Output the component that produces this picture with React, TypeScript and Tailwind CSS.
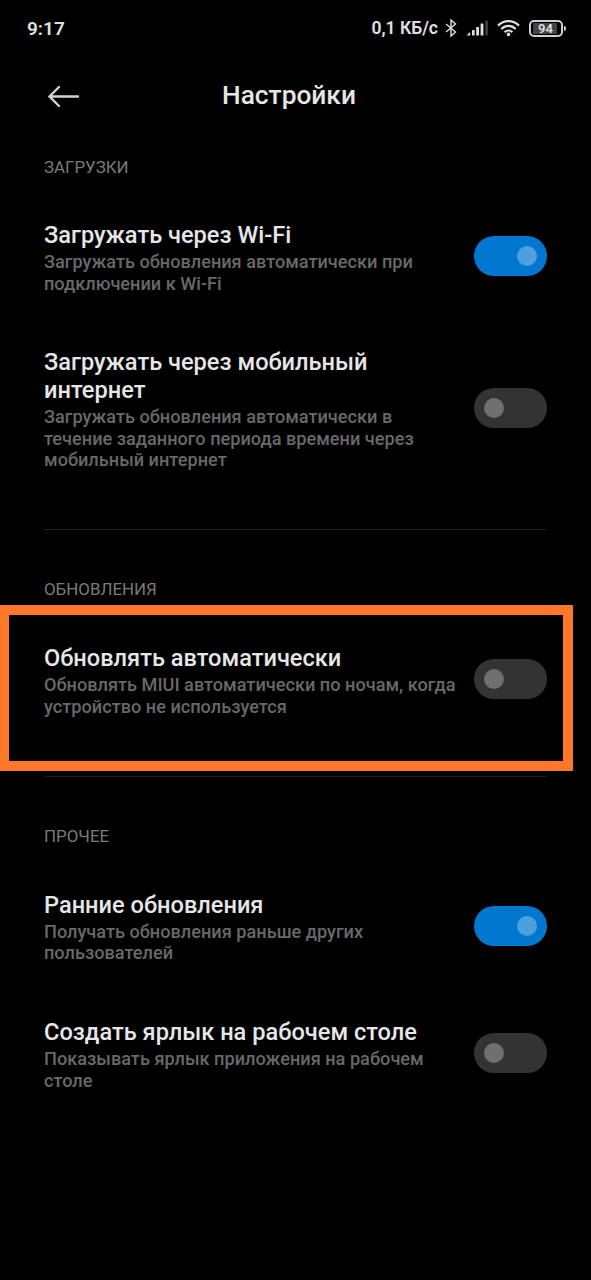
import React, { useState } from 'react';

interface SettingRowProps {
  title: string[];
  description: string[];
  defaultOn?: boolean;
  className?: string;
}

const Toggle: React.FC<{ on: boolean; onChange: () => void }> = ({ on, onChange }) => (
  <button
    role="switch"
    aria-checked={on}
    onClick={onChange}
    className={`flex h-10 w-[73px] shrink-0 items-center rounded-full px-[10px] ${
      on ? 'justify-end bg-[#0277cf]' : 'justify-start bg-[#333333]'
    }`}
  >
    <span className={`h-5 w-5 rounded-full ${on ? 'bg-[#4da0dd]' : 'bg-[#707070]'}`} />
  </button>
);

const SettingRow: React.FC<SettingRowProps> = ({ title, description, defaultOn = false, className = '' }) => {
  const [on, setOn] = useState(defaultOn);

  return (
    <div className={`flex items-center justify-between ${className}`}>
      <div className="self-start whitespace-nowrap">
        <h3 className="text-[23.6px] leading-[28px] font-medium text-[#e6e6e6]">
          {title.map((line) => (
            <span key={line} className="block">{line}</span>
          ))}
        </h3>
        <p className="mt-[2.2px] text-[18.17px] leading-[21.4px] font-medium text-[#686868]">
          {description.map((line) => (
            <span key={line} className="block">{line}</span>
          ))}
        </p>
      </div>
      <Toggle on={on} onChange={() => setOn(!on)} />
    </div>
  );
};

const SectionTitle: React.FC<{ children: React.ReactNode }> = ({ children }) => (
  <h2 className="h-6 text-[16.9px] leading-6 text-[#7a7a7a]">{children}</h2>
);

const StatusBar = () => (
  <div className="flex h-14 items-center justify-between pr-[25px] pl-[27px] text-[#e0e0e0]">
    <span className="pt-[2px] text-[19px] font-semibold">9:17</span>
    <div className="flex items-center">
      <span className="mr-[7px] pt-px text-[17.5px] font-semibold">0,1 КБ/с</span>
      <svg width="12" height="18" viewBox="0 0 12 18" fill="none" stroke="currentColor" strokeWidth="1.4">
        <path d="M1 5 10.5 13 6 17V1L10.5 5 1 13" />
      </svg>
      <svg className="ml-[9px]" width="23" height="16" viewBox="0 0 23 16" fill="currentColor">
        <path d="M0.5 15.5 4.2 12v3.5z" />
        <rect x="6" y="10" width="2.6" height="5.5" rx="0.5" />
        <rect x="10.2" y="7" width="2.8" height="8.5" rx="0.5" />
        <rect x="14.6" y="3.5" width="2.8" height="12" rx="0.5" />
        <rect x="19.4" y="0.5" width="2.4" height="15" rx="0.5" opacity="0.3" />
      </svg>
      <svg className="ml-[8px]" width="23" height="17" viewBox="0 0 23 17" fill="none" stroke="currentColor" strokeWidth="2.2">
        <path d="M1 5.6C7-.4 16-.4 22 5.6M4.3 9C8.5 4.9 14.5 4.9 18.7 9M7.6 12.2c2.3-2.3 5.5-2.3 7.8 0" />
        <circle cx="11.5" cy="14.4" r="1.8" fill="currentColor" stroke="none" />
      </svg>
      <div className="ml-[9px] flex items-center">
        <div className="flex h-[17px] w-[34px] items-center justify-center rounded-[5px] border-2 border-[#cfcfcf] p-[2px]">
          <span className="flex h-[11px] w-full items-center bg-[linear-gradient(to_right,#444_92%,transparent_92%)] pl-[5px] text-[13px] leading-none font-semibold">
            94
          </span>
        </div>
        <span className="ml-px h-[5px] w-[2px] rounded-r bg-[#cfcfcf]" />
      </div>
    </div>
  </div>
);

const App: React.FC = () => (
  <div className="relative h-[1280px] w-[591px] overflow-hidden bg-black font-['Roboto',sans-serif]">
    <StatusBar />

    <header className="flex h-[99px] items-start pt-[24px] pl-[47px]">
      <button aria-label="Назад" className="mt-[5px]">
        <svg width="33" height="24" viewBox="0 0 33 24" fill="none" stroke="#d6d0d0" strokeWidth="2.4" strokeLinecap="round">
          <path d="M31 11.5H2.5M12 2 2.5 11.5 12 21" />
        </svg>
      </button>
      <h1 className="ml-[142px] text-[26.3px] leading-[30px] font-medium text-[#e6e6e6]">Настройки</h1>
    </header>

    <main className="px-11">
      <SectionTitle>ЗАГРУЗКИ</SectionTitle>
      <SettingRow
        className="mt-[42px] h-[70px]"
        title={['Загружать через Wi-Fi']}
        description={['Загружать обновления автоматически при', 'подключении к Wi-Fi']}
        defaultOn
      />
      <SettingRow
        className="mt-[57px] h-[120px]"
        title={['Загружать через мобильный', 'интернет']}
        description={['Загружать обновления автоматически в', 'течение заданного периода времени через', 'мобильный интернет']}
      />
      <hr className="mt-[61px] border-[#202020]" />
    </main>

    <section className="px-11 pt-[47px]">
      <SectionTitle>ОБНОВЛЕНИЯ</SectionTitle>
      <SettingRow
        className="mt-[43px] h-[70px]"
        title={['Обновлять автоматически']}
        description={['Обновлять MIUI автоматически по ночам, когда', 'устройство не используется']}
      />
      <hr className="mt-[62px] border-[#1c1c1c]" />
    </section>

    <section className="px-11 pt-[47px]">
      <SectionTitle>ПРОЧЕЕ</SectionTitle>
      <SettingRow
        className="mt-[42.5px] h-[70px]"
        title={['Ранние обновления']}
        description={['Получать обновления раньше других', 'пользователей']}
        defaultOn
      />
      <SettingRow
        className="mt-[57.5px] h-[70px]"
        title={['Создать ярлык на рабочем столе']}
        description={['Показывать ярлык приложения на рабочем', 'столе']}
      />
    </section>

    {/* Highlight frame over the auto-update setting */}
    <div className="pointer-events-none absolute top-[605px] -left-px h-[166px] w-[574px] border-[10px] border-[#ff7728]" />
  </div>
);

export default App;
